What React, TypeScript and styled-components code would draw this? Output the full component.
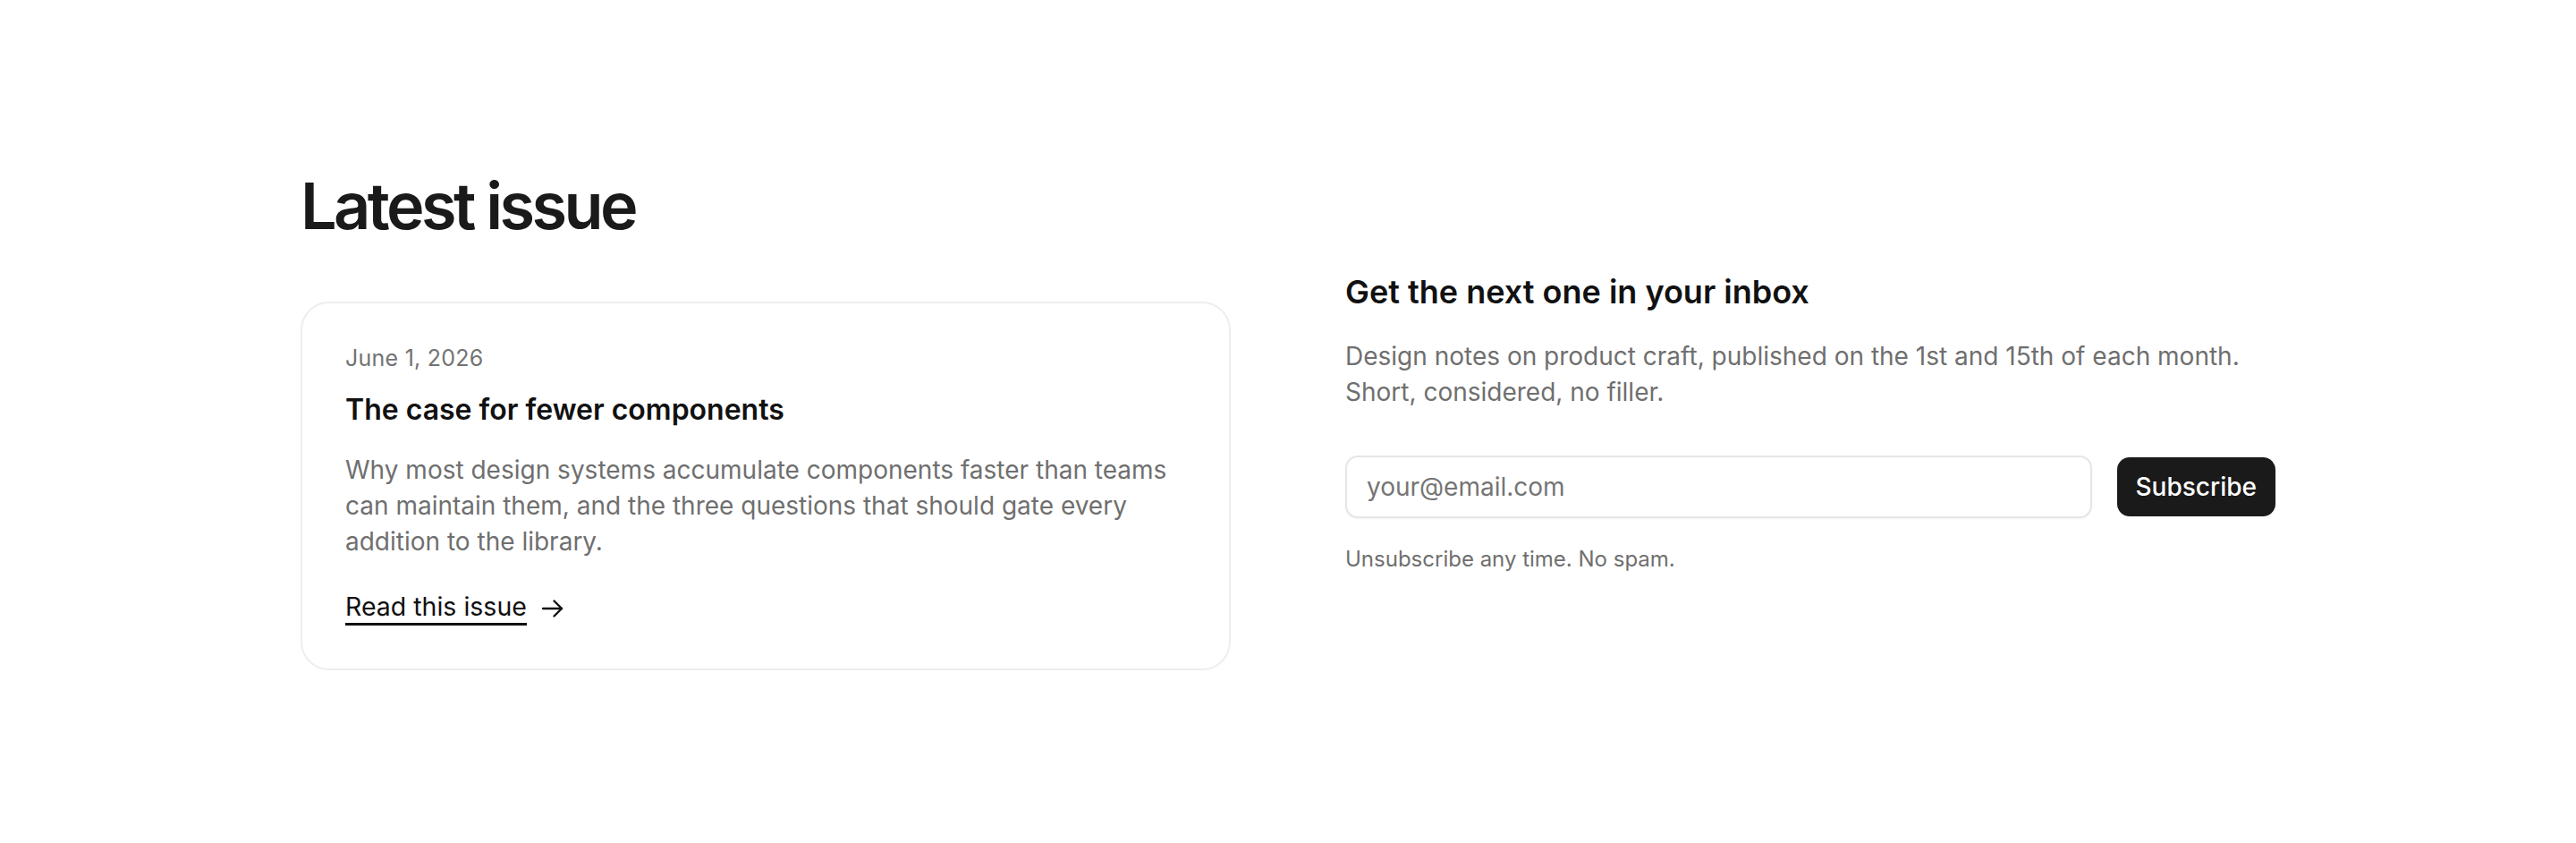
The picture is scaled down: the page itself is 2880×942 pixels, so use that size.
import styled, { createGlobalStyle } from 'styled-components';

const GlobalStyle = createGlobalStyle`
  * { box-sizing: border-box; }
  body {
    margin: 0;
    background: #ffffff;
    font-family: Inter, "Noto Sans", "Liberation Sans", sans-serif;
    color: #111111;
  }
`;

const Page = styled.main`
  padding: 190px 0 120px;
`;

const Container = styled.div`
  max-width: 2208px;
  margin: 0 auto;
  display: grid;
  grid-template-columns: 1fr 1fr;
  column-gap: 128px;
  align-items: center;
`;

const LeftColumn = styled.section`
  display: flex;
  flex-direction: column;
`;

const PageTitle = styled.h1`
  margin: 0 0 68px;
  font-size: 72px;
  line-height: 1.1;
  font-weight: 600;
  letter-spacing: -0.05em;
  color: #1a1a1a;
`;

const Card = styled.article`
  border: 2px solid #eeeeee;
  border-radius: 32px;
  padding: 43px 48px 48px;
  display: flex;
  flex-direction: column;
`;

const DateLabel = styled.time`
  font-size: 25px;
  line-height: 36px;
  color: #737373;
  letter-spacing: 0.01em;
`;

const Heading = styled.h2<{ $size: number }>`
  margin: 0;
  font-size: ${p => p.$size}px;
  line-height: ${p => p.$size + 8}px;
  font-weight: 600;
  color: #111111;
`;

const CardTitle = styled(Heading)`
  margin-top: 20px;
`;

const Muted = styled.p<{ $size?: number }>`
  margin: 0;
  font-size: ${p => p.$size || 28}px;
  line-height: 40px;
  color: #6f6f6f;
`;

const CardText = styled(Muted)`
  margin-top: 27px;
`;

const ReadLink = styled.a`
  margin-top: 35px;
  display: inline-flex;
  align-items: center;
  gap: 17px;
  align-self: flex-start;
  color: #111111;
  text-decoration: none;
  font-size: 28.5px;
  cursor: pointer;
`;

const LinkLabel = styled.span`
  display: inline-block;
  line-height: 36px;
  border-bottom: 3px solid #111111;
`;

const RightColumn = styled.section`
  display: flex;
  flex-direction: column;
  padding-top: 6px;
`;

const InboxText = styled(Muted)`
  margin-top: 30px;
`;

const Form = styled.form`
  margin-top: 51px;
  display: flex;
  align-items: center;
  gap: 28px;
`;

const EmailInput = styled.input`
  flex: 1;
  height: 70px;
  padding: 0 22px;
  border: 2px solid #e6e6e6;
  border-radius: 14px;
  box-shadow: 0 1px 2px rgba(0, 0, 0, 0.05);
  font-family: inherit;
  font-size: 28px;
  color: #111111;
  outline: none;

  &::placeholder {
    color: #757575;
  }
`;

const SubscribeButton = styled.button`
  height: 66px;
  padding: 0 21px;
  border: none;
  border-radius: 14px;
  background: #1a1a1a;
  color: #ffffff;
  font-family: inherit;
  font-size: 28px;
  font-weight: 500;
  cursor: pointer;
`;

const Note = styled(Muted)`
  margin-top: 29px;
  line-height: 34px;
`;

const Arrow = () => (
  <svg width="24" height="22" viewBox="0 0 24 22" fill="none" stroke="#111" strokeWidth="2.4" strokeLinecap="round" strokeLinejoin="round">
    <path d="M1 11h21" />
    <path d="M13.5 2.5 22 11l-8.5 8.5" />
  </svg>
);

export default function App() {
  return (
    <Page>
      <GlobalStyle />
      <Container>
        <LeftColumn>
          <PageTitle>Latest issue</PageTitle>
          <Card>
            <DateLabel>June 1, 2026</DateLabel>
            <CardTitle as="h3" $size={32}>The case for fewer components</CardTitle>
            <CardText>
              Why most design systems accumulate components faster than teams can maintain them, and the three questions that should gate every addition to the library.
            </CardText>
            <ReadLink>
              <LinkLabel>Read this issue</LinkLabel>
              <Arrow />
            </ReadLink>
          </Card>
        </LeftColumn>
        <RightColumn>
          <Heading $size={36}>Get the next one in your inbox</Heading>
          <InboxText>
            Design notes on product craft, published on the 1st and 15th of each month.
            <br />
            Short, considered, no filler.
          </InboxText>
          <Form onSubmit={e => e.preventDefault()}>
            <EmailInput type="email" placeholder="your@email.com" />
            <SubscribeButton type="submit">Subscribe</SubscribeButton>
          </Form>
          <Note $size={24}>Unsubscribe any time. No spam.</Note>
        </RightColumn>
      </Container>
    </Page>
  );
}
